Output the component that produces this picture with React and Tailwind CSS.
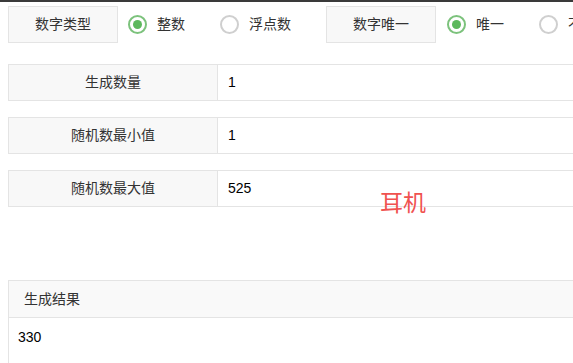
import React from 'react'

const font = { fontFamily: '"Liberation Sans", "Noto Sans CJK SC", sans-serif' }

function Radio({ label, checked }) {
  return (
    <div className="flex items-center mr-[35px] shrink-0">
      {checked ? (
        <span className="w-[19px] h-[19px] rounded-full border-2 border-[#7cc27c] flex items-center justify-center">
          <span className="w-[9px] h-[9px] rounded-full bg-[#5cb85c]"></span>
        </span>
      ) : (
        <span className="w-[19px] h-[19px] rounded-full border-2 border-[#cfcfcf]"></span>
      )}
      <span className="ml-[10px] text-[14px] text-[#333]">{label}</span>
    </div>
  )
}

function Row({ label, value }) {
  return (
    <div className="flex h-[37px] w-[700px] border border-[#e4e4e4] text-[14px]">
      <div className="w-[209px] shrink-0 bg-[#f8f8f8] border-r border-[#e4e4e4] flex items-center justify-center text-[#333]">{label}</div>
      <div className="flex-1 flex items-center pl-[10px] text-black">{value}</div>
    </div>
  )
}

export default function App() {
  return (
    <div className="relative w-full h-screen overflow-hidden bg-white" style={font}>
      <div className="h-[2px] bg-[#3a3a3a]"></div>
      <div className="pl-2 pt-1">
        <div className="flex items-center w-[700px]">
          <div className="w-[110px] h-[37px] shrink-0 bg-[#f8f8f8] border border-[#e4e4e4] flex items-center justify-center text-[14px] text-[#333]">数字类型</div>
          <div className="ml-[10px] flex items-center">
            <Radio label="整数" checked />
            <Radio label="浮点数" />
          </div>
          <div className="w-[110px] h-[37px] shrink-0 bg-[#f8f8f8] border border-[#e4e4e4] flex items-center justify-center text-[14px] text-[#333]">数字唯一</div>
          <div className="ml-[11px] flex items-center">
            <Radio label="唯一" checked />
            <Radio label="不唯一" />
          </div>
        </div>

        <div className="mt-[21px] flex flex-col gap-4">
          <Row label="生成数量" value="1" />
          <Row label="随机数最小值" value="1" />
          <Row label="随机数最大值" value="525" />
        </div>

        <div className="mt-[73px] w-[700px] border border-[#e4e4e4]">
          <div className="h-[37px] bg-[#f9f9f9] border-b border-[#e4e4e4] flex items-center pl-[15px] text-[14px] text-[#333]">生成结果</div>
          <div className="pl-[9px] pt-[9px] h-[60px] text-[14px] text-black">330</div>
        </div>
      </div>
      <div className="absolute left-[380px] top-[186px] text-[23px] text-[#f0524f]">耳机</div>
    </div>
  )
}
